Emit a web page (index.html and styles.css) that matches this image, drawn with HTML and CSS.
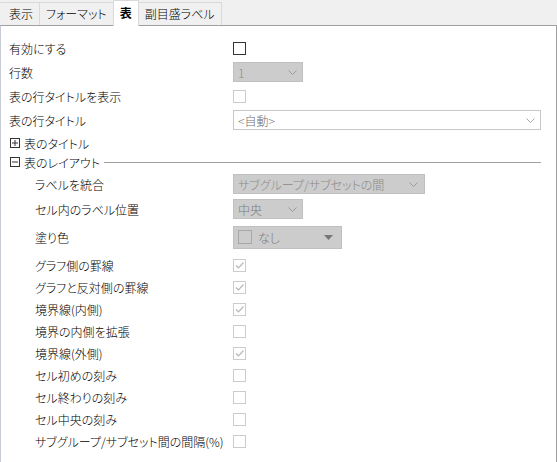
FILE: index.html
```html
<!DOCTYPE html>
<html lang="ja">
<head>
<meta charset="utf-8">
<link rel="stylesheet" href="styles.css">
</head>
<body>
<div class="tabs">
  <div class="tab">表示</div>
  <div class="tab">フォーマット</div>
  <div class="tab active">表</div>
  <div class="tab">副目盛ラベル</div>
</div>
<div class="pane">
  <div class="row h24"><span class="label">有効にする</span><span class="cb enabled"></span></div>
  <div class="row h24"><span class="label">行数</span>
    <div class="dd disabled w70"><span class="val">1</span><svg class="chev" width="9" height="5" viewBox="0 0 9 5"><path d="M0.5 0.5L4.5 4.5L8.5 0.5" fill="none" stroke="#9a9a9a"/></svg></div>
  </div>
  <div class="row h24"><span class="label">表の行タイトルを表示</span><span class="cb"></span></div>
  <div class="row h24"><span class="label">表の行タイトル</span>
    <div class="dd white grow"><span class="val">&lt;自動&gt;</span><svg class="chev" width="9" height="5" viewBox="0 0 9 5"><path d="M0.5 0.5L4.5 4.5L8.5 0.5" fill="none" stroke="#a8a8a8"/></svg></div>
  </div>
  <div class="row h22 group"><svg class="tog" width="10" height="10" viewBox="0 0 10 10"><rect x="0.5" y="0.5" width="9" height="9" fill="none" stroke="#333"/><path d="M2 5h6M5 2v6" stroke="#333"/></svg><span>表のタイトル</span></div>
  <div class="row h16 group"><svg class="tog" width="10" height="10" viewBox="0 0 10 10"><rect x="0.5" y="0.5" width="9" height="9" fill="none" stroke="#333"/><path d="M2 5h6" stroke="#333"/></svg><span>表のレイアウト</span><span class="sep"></span></div>
  <div class="row h28 sub"><span class="label">ラベルを統合</span>
    <div class="dd disabled w191"><span class="val">サブグループ/サブセットの間</span><svg class="chev" width="9" height="5" viewBox="0 0 9 5"><path d="M0.5 0.5L4.5 4.5L8.5 0.5" fill="none" stroke="#9a9a9a"/></svg></div>
  </div>
  <div class="row h22 sub"><span class="label">セル内のラベル位置</span>
    <div class="dd disabled w70"><span class="val dark">中央</span><svg class="chev" width="9" height="5" viewBox="0 0 9 5"><path d="M0.5 0.5L4.5 4.5L8.5 0.5" fill="none" stroke="#9a9a9a"/></svg></div>
  </div>
  <div class="row h34 sub"><span class="label">塗り色</span>
    <div class="dd disabled color w108"><span class="swatch"></span><span class="val dark">なし</span><svg class="tri" width="9" height="5" viewBox="0 0 9 5"><path d="M0 0H9L4.5 5Z" fill="#777"/></svg></div>
  </div>
  <div class="row h22 sub"><span class="label">グラフ側の罫線</span><span class="cb checked"><svg width="11" height="11" viewBox="0 0 11 11"><path d="M2 5.5L4.5 8L9.5 2.5" fill="none" stroke="#b8b8b8" stroke-width="1.2"/></svg></span></div>
  <div class="row h22 sub"><span class="label">グラフと反対側の罫線</span><span class="cb checked"><svg width="11" height="11" viewBox="0 0 11 11"><path d="M2 5.5L4.5 8L9.5 2.5" fill="none" stroke="#b8b8b8" stroke-width="1.2"/></svg></span></div>
  <div class="row h22 sub"><span class="label">境界線(内側)</span><span class="cb checked"><svg width="11" height="11" viewBox="0 0 11 11"><path d="M2 5.5L4.5 8L9.5 2.5" fill="none" stroke="#b8b8b8" stroke-width="1.2"/></svg></span></div>
  <div class="row h22 sub"><span class="label">境界の内側を拡張</span><span class="cb"></span></div>
  <div class="row h22 sub"><span class="label">境界線(外側)</span><span class="cb checked"><svg width="11" height="11" viewBox="0 0 11 11"><path d="M2 5.5L4.5 8L9.5 2.5" fill="none" stroke="#b8b8b8" stroke-width="1.2"/></svg></span></div>
  <div class="row h22 sub"><span class="label">セル初めの刻み</span><span class="cb"></span></div>
  <div class="row h22 sub"><span class="label">セル終わりの刻み</span><span class="cb"></span></div>
  <div class="row h22 sub"><span class="label">セル中央の刻み</span><span class="cb"></span></div>
  <div class="row h22 sub"><span class="label">サブグループ/サブセット間の間隔(%)</span><span class="cb"></span></div>
</div>
</body>
</html>
```

FILE: styles.css
```css
* { box-sizing: border-box; }
html, body { margin: 0; padding: 0; }
body {
  background: #f0f0f0;
  font-family: "Noto Sans CJK JP", "Noto Sans", sans-serif;
  font-size: 12px;
  font-weight: 300;
  font-feature-settings: "palt";
  color: #000;
  width: 557px;
  height: 462px;
  overflow: hidden;
}
.tabs {
  display: flex;
  align-items: flex-end;
  height: 25px;
  position: relative;
  z-index: 1;
}
.tab {
  height: 23px;
  line-height: 21px;
  padding: 0 6px;
  border: 1px solid #d9d9d9;
  border-bottom: none;
  margin-right: -1px;
  background: #f0f0f0;
}
.tab:first-child { border-left-color: #f0f0f0; padding-left: 8px; }
.tab.active {
  height: 26px;
  line-height: 24px;
  margin-bottom: -1px;
  background: #fff;
  font-weight: bold;
  border-color: #d9d9d9;
  position: relative;
  z-index: 2;
}
.pane {
  background: #fff;
  border-top: 1px solid #a0a0a0;
  border-right: 1px solid #a0a0a0;
  border-left: 1px solid #c8ccd4;
  height: 437px;
  padding: 10px 15px 0 8px;
}
.row {
  display: flex;
  align-items: center;
}
.h16 { height: 16px; }
.h22 { height: 22px; }
.h24 { height: 24px; }
.h28 { height: 28px; }
.h34 { height: 34px; }
.label {
  width: 224px;
  flex: none;
  white-space: nowrap;
}
.sub .label { padding-left: 26px; }
.group { padding-left: 1px; }
.tog { flex: none; margin-right: 4px; }
.sep {
  flex: 1;
  height: 0;
  border-top: 1px solid #a0a0a0;
  margin-left: 4px;
}
.cb {
  width: 13px;
  height: 13px;
  border: 1px solid #cccccc;
  background: #fff;
  display: flex;
  align-items: center;
  justify-content: center;
  flex: none;
}
.cb.enabled { border-color: #333; }
.dd {
  height: 20px;
  display: flex;
  align-items: center;
  padding: 0 5px 0 4px;
  border: 1px solid #c0c0c0;
  flex: none;
}
.dd .val { flex: 1; white-space: nowrap; overflow: hidden; }
.dd.disabled { background: #cccccc; color: #8a8a8a; }
.dd.disabled .val.dark { color: #7a7a7a; }
.dd.white { background: #fff; color: #6e6e6e; border-color: #c8c8c8; }
.grow { flex: 1; }
.w70 { width: 70px; }
.w191 { width: 192px; padding-right: 6px; }
.w108 { width: 109px; height: 23px; padding: 0 8px 0 4px; }
.swatch {
  width: 14px;
  height: 14px;
  border: 1px solid #a8a8a8;
  margin-right: 6px;
  flex: none;
}
.chev, .tri { flex: none; }
```
